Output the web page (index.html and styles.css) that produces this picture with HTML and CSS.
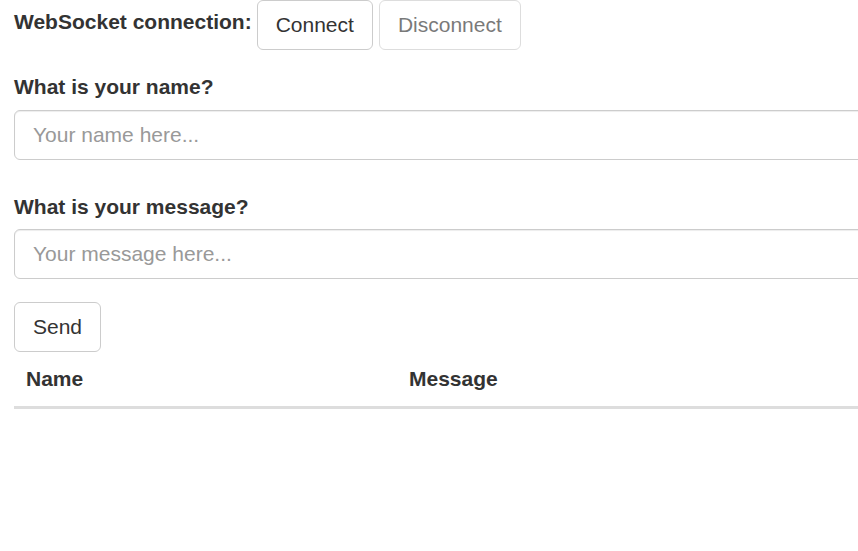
FILE: index.html
```html
<!DOCTYPE html>
<html>
<head>
<meta charset="utf-8">
<link rel="stylesheet" href="styles.css">
</head>
<body>
<div class="page">
  <form class="conn-row">
    <label class="lbl">WebSocket connection:</label>
    <button type="button" class="btn">Connect</button>
    <button type="button" class="btn disabled">Disconnect</button>
  </form>
  <form class="stack">
    <div class="group group-name">
      <label class="lbl">What is your name?</label>
      <input class="field" type="text" placeholder="Your name here...">
    </div>
    <div class="group group-msg">
      <label class="lbl">What is your message?</label>
      <input class="field" type="text" placeholder="Your message here...">
    </div>
    <div class="send-row">
      <button type="button" class="btn">Send</button>
    </div>
  </form>
  <table class="tbl">
    <thead>
      <tr><th class="col-name">Name</th><th>Message</th></tr>
    </thead>
    <tbody></tbody>
  </table>
</div>
</body>
</html>
```
FILE: styles.css
```css
html, body {
  margin: 0;
  padding: 0;
  overflow: hidden;
  background: #fff;
}
body {
  font-family: "Liberation Sans", Arial, sans-serif;
  font-size: 21px;
  line-height: 30px;
  color: #333;
}
.page {
  width: 900px;
  padding-left: 14px;
}
.conn-row {
  display: flex;
  align-items: center;
  gap: 6px;
  margin: 0;
}
.lbl {
  font-weight: bold;
  font-size: 21px;
  line-height: 30px;
}
.conn-row .lbl {
  margin-right: -1px;
  position: relative;
  top: -3px;
}
.btn {
  font-family: inherit;
  font-size: 21px;
  line-height: 30px;
  color: #333;
  background: #fff;
  border: 1px solid #ccc;
  border-radius: 6px;
  padding: 9px 18px;
  height: 50px;
  box-sizing: border-box;
  margin: 0;
}
.btn.disabled {
  opacity: 0.65;
}
.stack {
  margin: 0;
  padding-top: 22px;
}
.group {
  display: flex;
  flex-direction: column;
}
.group-name {
  margin-bottom: 32px;
}
.group-msg {
  margin-bottom: 23px;
}
.group .lbl {
  margin-bottom: 8px;
}
.group-msg .lbl {
  margin-bottom: 7px;
}
.field {
  font-family: inherit;
  font-size: 21px;
  height: 50px;
  box-sizing: border-box;
  padding: 9px 18px;
  border: 1px solid #ccc;
  border-radius: 6px;
  box-shadow: inset 0 1px 1px rgba(0,0,0,.075);
  color: #555;
  width: 900px;
}
.field::placeholder {
  color: #999;
}
.tbl {
  border-collapse: collapse;
  width: 900px;
  margin-top: 0;
}
.tbl th {
  text-align: left;
  font-size: 21px;
  padding: 12px 12px;
  border-bottom: 3px solid #ddd;
  line-height: 30px;
}
.tbl .col-name {
  width: 359px;
}
```
